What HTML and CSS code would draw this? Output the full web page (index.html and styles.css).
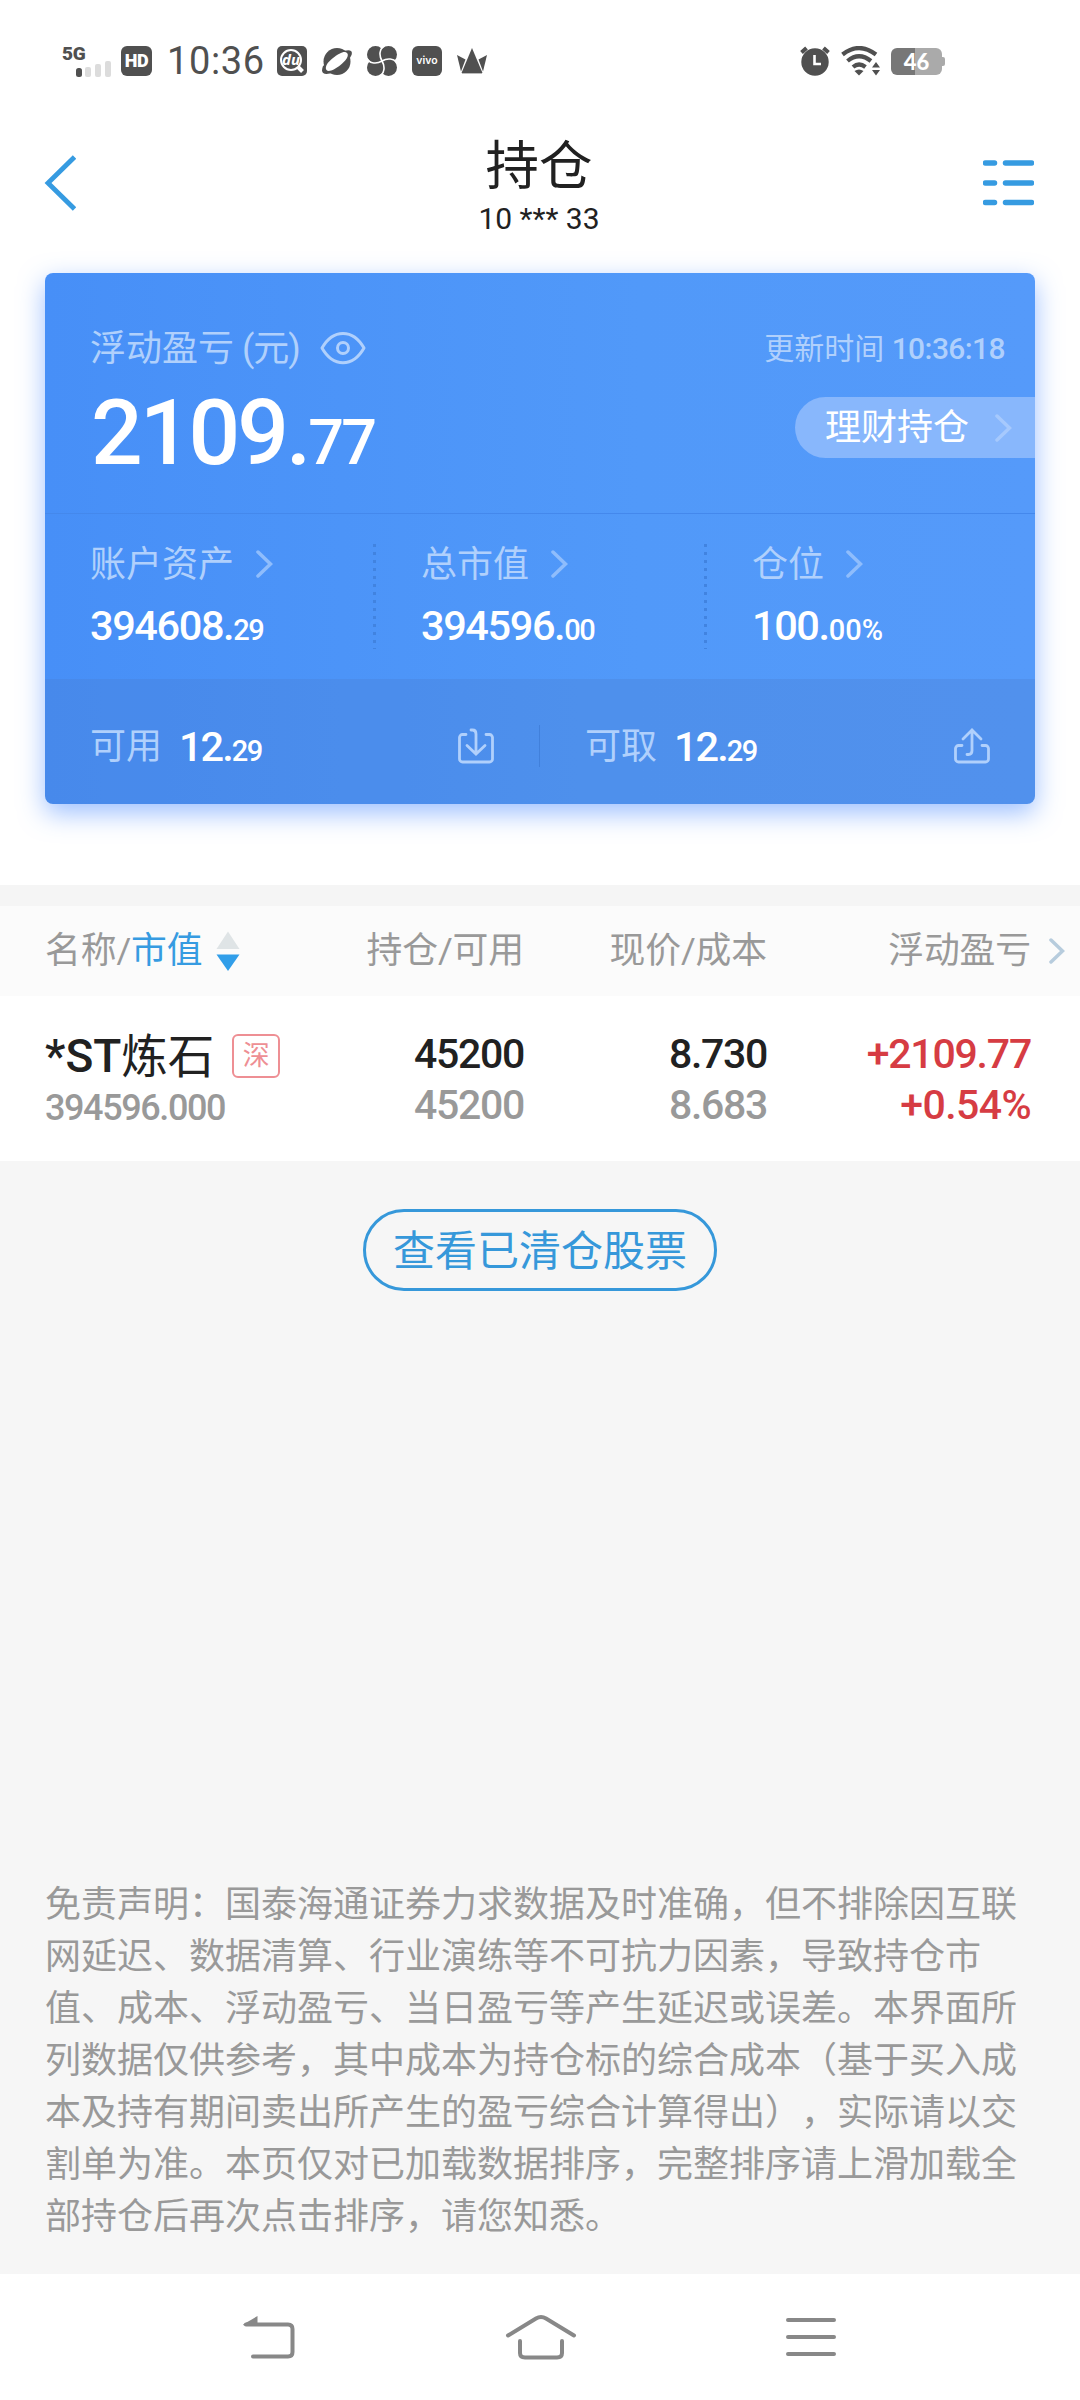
FILE: index.html
```html
<!DOCTYPE html>
<html lang="zh-CN">
<head>
<meta charset="utf-8">
<title>持仓</title>
<link rel="stylesheet" href="styles.css">
</head>
<body>
<div class="screen">
  <div class="status">
    <div class="status-left">
      <svg class="signal" width="50" height="40" viewBox="0 -2 50 40">
        <text x="1" y="17" class="g5">5G</text>
        <rect x="15" y="25" width="6" height="9" rx="2.500" fill="#505050"/>
        <rect x="24" y="24" width="6" height="10" rx="2" fill="#dcdcdc"/>
        <rect x="34" y="21" width="6" height="13" rx="2" fill="#dcdcdc"/>
        <rect x="44" y="18" width="6" height="16" rx="2" fill="#dcdcdc"/>
      </svg>
      <span class="chip hd">HD</span>
      <span class="clock">10:36</span>
      <svg class="app" width="30" height="30" viewBox="0 0 30 30">
        <rect width="30" height="30" rx="5" fill="#505050"/>
        <circle cx="14" cy="14" r="10" fill="none" stroke="#fff" stroke-width="2"/>
        <path d="M21 21l4.500 4.500" stroke="#fff" stroke-width="4"/>
        <text x="14" y="18.500" class="du">du</text>
      </svg>
      <svg class="app" width="30" height="30" viewBox="0 0 30 30">
        <circle cx="15" cy="15.500" r="13.500" fill="#505050"/>
        <path d="M22 5C28 3.500 31 4.500 29.500 9 26 17 17 24.500 8 27.500 1 29-1.500 26.500 1 20Z" fill="#505050"/>
        <path d="M25 7c2.500 2.500-1 7.500-6.500 12S6.500 26.500 4.500 24 5 16.500 11 12 22.500 4.500 25 7Z" fill="#fff"/>
      </svg>
      <svg class="app" width="30" height="30" viewBox="0 0 30 30">
        <g fill="#505050"><circle cx="8.500" cy="8.500" r="8.500"/><circle cx="21.500" cy="8.500" r="8.500"/><circle cx="21.500" cy="21.500" r="8.500"/><circle cx="8.500" cy="21.500" r="8.500"/><rect x="8" y="8" width="14" height="14"/></g>
        <g fill="none" stroke="#fff" stroke-width="1.600"><path d="M17.500-.5C12 3 12 10 15 15"/><path d="M30.500 17.500C27 12 20 12 15 15"/><path d="M12.500 30.500C18 27 18 20 15 15"/><path d="M-.5 12.500C3 18 10 18 15 15"/></g>
      </svg>
      <span class="chip vivo">vivo</span>
      <svg class="app" width="30" height="30" viewBox="0 0 30 30">
        <g fill="#505050"><path d="M15 2L25.500 27H4.500Z"/><path d="M0 9L8.500 13.500 4 25.500Z"/><path d="M30 9L21.500 13.500 26 25.500Z"/></g>
        <path d="M5 27.500H25" stroke="#bbb" stroke-width="1"/>
      </svg>
    </div>
    <div class="status-right">
      <svg width="30" height="30" viewBox="0 0 30 30">
        <circle cx="15" cy="16" r="13.700" fill="#505050"/>
        <path d="M1.500 6.500L6.500 2M28.500 6.500L23.500 2" stroke="#505050" stroke-width="4"/>
        <path d="M14.500 9v9h6.500" fill="none" stroke="#fff" stroke-width="2.600"/>
      </svg>
      <svg class="wifi" width="39" height="30" viewBox="0 0 39 30">
        <g fill="none" stroke="#505050" stroke-width="4.200"><path d="M1.500 8.500Q18-4.500 35 8.500"/><path d="M6.500 15Q18 5.500 30 15"/><path d="M12 21Q18 16 24.500 21"/></g>
        <path d="M13.500 25Q18 22 22.500 25L18 29.500Z" fill="#505050"/>
        <path d="M26 31V20L34 11h7v20Z" fill="#fff"/>
        <path d="M31 21.500h8L35 16ZM31 24h8L35 29.500Z" fill="#505050"/>
      </svg>
      <span class="battery">46</span>
    </div>
  </div>

  <header class="header">
    <svg width="32" height="56" viewBox="0 0 32 56"><path d="M30.500 2L4 28 30.500 54" fill="none" stroke="#369be1" stroke-width="4.800"/></svg>
    <div class="titles">
      <h1 class="title">持仓</h1>
      <div class="account">10 *** 33</div>
    </div>
    <svg width="51" height="48" viewBox="0 0 51 48"><path d="M2.500 4h9M22.500 4h26M2.500 24h9M22.500 24h26M2.500 43.500h9M22.500 43.500h26" stroke="#369be1" stroke-width="5.500" stroke-linecap="round"/></svg>
  </header>

  <section class="card">
    <div class="summary">
      <div>
        <div class="label summary-label">浮动盈亏<span class="unit">(元)</span>
          <svg width="46" height="34" viewBox="0 0 46 34"><path d="M2 17C13-2.500 33-2.500 44 17 33 36.500 13 36.500 2 17Z" fill="none" stroke="#b0d0fc" stroke-width="3" stroke-linejoin="round"/><circle cx="23" cy="17" r="5.500" fill="none" stroke="#b0d0fc" stroke-width="3"/></svg>
        </div>
        <div class="total">2109.<span class="total-dec">77</span></div>
      </div>
      <div class="summary-right">
        <div class="updated">更新时间 <span class="updated-time">10:36:18</span></div>
        <div class="wealth"><span class="wealth-text">理财持仓</span><svg width="17" height="28" viewBox="0 0 17 28"><path d="M2 2L14.500 14 2 26" class="chev"/></svg></div>
      </div>
    </div>
    <div class="stats">
      <div class="stat">
        <div class="label">账户资产<svg width="17" height="28" viewBox="0 0 17 28"><path d="M2 2L14.500 14 2 26" class="chev"/></svg></div>
        <div class="num">394608.<span class="dec">29</span></div>
      </div>
      <div class="stat">
        <div class="label">总市值<svg width="17" height="28" viewBox="0 0 17 28"><path d="M2 2L14.500 14 2 26" class="chev"/></svg></div>
        <div class="num">394596.<span class="dec">00</span></div>
      </div>
      <div class="stat">
        <div class="label">仓位<svg width="17" height="28" viewBox="0 0 17 28"><path d="M2 2L14.500 14 2 26" class="chev"/></svg></div>
        <div class="num ratio">100.<span class="dec">00%</span></div>
      </div>
    </div>
    <div class="cash">
      <div class="cash-item">
        <span class="label">可用</span><span class="num">12.<span class="dec">29</span></span>
        <svg width="36" height="36" viewBox="0 0 36 36"><g class="line"><path d="M8 6.500H4.500a3 3 0 0 0-3 3V31a3 3 0 0 0 3 3H31.500a3 3 0 0 0 3-3V9.500a3 3 0 0 0-3-3H28"/><path d="M13 2h1.500Q18 2 18 6V25M9 17.500L18 26 27 17.500"/></g></svg>
      </div>
      <div class="cash-item">
        <span class="label">可取</span><span class="num">12.<span class="dec">29</span></span>
        <svg width="36" height="36" viewBox="0 0 36 36"><g class="line"><path d="M8 17.500H4.500a3 3 0 0 0-3 3V31a3 3 0 0 0 3 3H31.500a3 3 0 0 0 3-3V20.500a3 3 0 0 0-3-3H28"/><path d="M13 26.500h1.500Q18 26.500 18 22.500V2M9 11L18 2 27 11"/></g></svg>
      </div>
    </div>
  </section>

  <section class="table">
    <div class="thead">
      <div class="th-name">名称/<span class="active">市值</span>
        <svg width="24" height="40" viewBox="0 0 24 40"><path d="M12 .5L23.500 18H.5Z" fill="#dfe4e6"/><path d="M12 40L23.500 23.500H.5Z" fill="#319ee9"/></svg>
      </div>
      <div>持仓/可用</div>
      <div>现价/成本</div>
      <div>浮动盈亏</div>
      <svg class="more" width="16" height="26" viewBox="0 0 16 26"><path d="M2 2L13.500 13 2 24" fill="none" stroke="#b7ccdd" stroke-width="3.500" stroke-linecap="round"/></svg>
    </div>
    <div class="row">
      <div class="stock">
        <div class="name">*ST<span class="name-cn">炼石</span><span class="tag">深</span></div>
        <div class="value">394596.000</div>
      </div>
      <div class="cell"><div>45200</div><div class="sub">45200</div></div>
      <div class="cell"><div>8.730</div><div class="sub">8.683</div></div>
      <div class="cell gain"><div>+2109.77</div><div class="rate">+0.54%</div></div>
    </div>
  </section>

  <main class="rest">
    <a class="cleared">查看已清仓股票</a>
    <p class="disclaimer">免责声明：国泰海通证券力求数据及时准确，但不排除因互联网延迟、数据清算、行业演练等不可抗力因素，导致持仓市值、成本、浮动盈亏、当日盈亏等产生延迟或误差。本界面所列数据仅供参考，其中成本为持仓标的综合成本（基于买入成本及持有期间卖出所产生的盈亏综合计算得出），实际请以交割单为准。本页仅对已加载数据排序，完整排序请上滑加载全部持仓后再次点击排序，请您知悉。</p>
  </main>

  <nav class="nav">
    <svg width="52" height="44" viewBox="0 0 52 44"><path d="M0 9.500L14.500 1V10.500H1Z" fill="#888"/><path d="M3 9.500H45Q49.500 9.500 49.500 14V37Q49.500 41.500 45 41.500H10" fill="none" stroke="#888" stroke-width="4" stroke-linecap="round"/></svg>
    <svg width="72" height="46" viewBox="0 0 72 46"><g fill="none" stroke="#888" stroke-width="4" stroke-linecap="round"><path d="M3 21.500L31 4.500Q36 1.500 41 4.500L69 21.500"/><path d="M15 27V39Q15 43.500 20 43.500H52Q57 43.500 57 39V27"/></g></svg>
    <svg width="50" height="40" viewBox="0 0 50 40"><path d="M2 3H48M2 20H48M2 37H48" stroke="#888" stroke-width="4" stroke-linecap="round"/></svg>
  </nav>
</div>
</body>
</html>
```

FILE: styles.css
```css
* { box-sizing: border-box; }
body {
  margin: 0;
  background: #f5f5f5;
  font-family: Roboto, "Noto Sans CJK SC", sans-serif;
  color: #212121;
  text-spacing-trim: space-all;
}
svg { display: block; flex: none; }
.screen { width: 1080px; height: 2400px; display: flex; flex-direction: column; background: #fff; }

/* system status bar */
.status { flex: none; height: 110px; display: flex; align-items: center; justify-content: space-between; padding: 12px 135px 0 61px; color: #505050; }
.status-left, .status-right { display: flex; align-items: center; }
.signal { margin-right: 10px; }
.g5 { font: 900 19px Roboto, sans-serif; fill: #505050; letter-spacing: -.2px; }
.chip { width: 31px; height: 30px; border-radius: 6px; background: #505050; color: #fff; text-align: center; line-height: 30px; }
.hd { font-size: 18px; font-weight: 900; margin-right: 15px; letter-spacing: -.5px; }
.clock { font-size: 38px; line-height: 40px; width: 110px; letter-spacing: .6px; }
.app { margin-right: 15px; }
.du { font: italic 700 15px "Open Sans", sans-serif; fill: #fff; text-anchor: middle; }
.vivo { width: 30px; font: 600 10.500px/30px Inter, sans-serif; margin-right: 15px; }
.wifi { margin: 0 11px; }
.battery {
  width: 51px; height: 27px; border-radius: 6px; margin-right: 3px; position: relative;
  background: linear-gradient(90deg, #777 24px, #aaa 24px);
  color: #fff; text-align: center; font: 900 22px/28px Lato, sans-serif;
}
.battery::after { content: ""; position: absolute; right: -3px; top: 9px; width: 3px; height: 9px; background: #aaa; border-radius: 0 2px 2px 0; }

/* page header */
.header { flex: none; height: 163px; display: flex; align-items: center; justify-content: space-between; padding: 0 46px 18px 44px; }
.titles { text-align: center; padding-left: 19px; }
.title { margin: 0; font-size: 53.500px; line-height: 73px; font-weight: 400; }
.account { font-size: 30px; line-height: 32px; }

/* asset card */
.card {
  margin: 0 45px; height: 531px; flex: none; border-radius: 8px; overflow: hidden;
  background: linear-gradient(90deg, #478ff7, #5199f9 60%, #559afa);
  box-shadow: 0 9px 26px rgba(60, 130, 255, .5);
  color: #fff;
}
.label { display: flex; align-items: center; font-size: 36px; line-height: 40px; padding-top: 2px; height: 40px; color: #b0d0fc; }
.label svg { margin: -2px 0 0 22px; }
.chev { fill: none; stroke: #8fbdfc; stroke-width: 3.5; stroke-linecap: round; }
.summary { height: 241px; border-bottom: 1px solid #4488ec; padding: 50px 0 0 46px; display: flex; justify-content: space-between; }
.summary-label { height: 50px; margin-left: -1px; }
.summary-label svg { margin-left: 0; }
.unit { margin: 0 20px 0 8px; letter-spacing: -1px; }
.total { font-size: 91px; font-weight: 500; line-height: 100px; margin-top: 10px; letter-spacing: -3px; }
.total-dec { font-size: 63px; letter-spacing: -2.800px; }
.summary-right { display: flex; flex-direction: column; align-items: flex-end; }
.updated { font-size: 30px; line-height: 50px; padding: 1px 30px 0 0; color: #b0d0fc; }
.updated-time { font-weight: 500; letter-spacing: -.6px; }
.wealth { margin-top: 23px; width: 240px; height: 61px; border-radius: 31px 0 0 31px; background: #88b7fc; padding: 0 23px 0 30px; display: flex; align-items: center; justify-content: space-between; font-size: 36px; }
.wealth .chev { stroke: #a6c9fd; }
.wealth-text { line-height: 40px; }

.stats { height: 165px; padding: 30px 0 31px 45px; display: grid; grid-template-columns: repeat(3, 331px); }
.stat { position: relative; }
.stat + .stat::before {
  content: ""; position: absolute; left: -48px; top: 0; width: 3px; height: 105px;
  background: repeating-linear-gradient(#4183e0 0 3px, transparent 3px 8px);
}
.num { font-size: 41.500px; font-weight: 500; line-height: 44px; letter-spacing: -1.400px; }
.dec { font-size: 29px; letter-spacing: -1.500px; }
.ratio .dec { letter-spacing: 0; }
.stat .num { margin-top: 20px; }

.cash { height: 125px; background: rgba(70, 120, 200, .25); display: grid; grid-template-columns: 494px 496px; }
.cash-item { display: flex; align-items: center; padding: 9px 45px 0; position: relative; }
.cash-item + .cash-item { padding-left: 46px; }
.cash-item .num { margin-left: 17px; padding-top: 5px; letter-spacing: -2px; }
.cash-item svg { margin-left: auto; }
.cash-item + .cash-item::before { content: ""; position: absolute; left: 0; top: 46px; width: 1px; height: 42px; background: #4180db; }
.line { fill: none; stroke: #b0d0fc; stroke-width: 2.800; stroke-linecap: round; }

/* holdings table */
.table { margin-top: 81px; border-top: 21px solid #f5f5f5; flex: none; }
.thead, .row { display: grid; grid-template-columns: 279px 200px 243px 264px 49px; padding-left: 45px; text-align: right; }
.thead { height: 90px; background: #fbfbfb; font-size: 35.800px; letter-spacing: -.1px; color: #999; align-items: center; line-height: 40px; }
.th-name { display: flex; align-items: center; }
.active { color: #369be1; }
.th-name svg { margin: -1px 0 0 14px; }
.more { justify-self: end; margin-right: 15px; }
.row { height: 165px; align-content: start; padding-top: 33px; }
.cell { font-size: 41px; font-weight: 500; line-height: 51px; letter-spacing: -1.300px; }
.sub { color: #999; }
.gain { color: #d63c43; letter-spacing: -1.200px; }
.rate { letter-spacing: -.600px; }
.stock { text-align: left; }
.name { display: flex; align-items: center; height: 54px; font-size: 46px; font-weight: 500; line-height: 54px; white-space: nowrap; }
.name-cn { font-weight: 400; font-size: 46.500px; padding-top: 1px; }
.tag { margin-left: 18px; width: 48px; height: 44px; border: 2px solid #ee8f94; border-radius: 6px; color: #ee8f94; font-size: 27px; font-weight: 400; line-height: 41px; text-align: center; }
.value { font-size: 36px; font-weight: 500; line-height: 51px; color: #999; letter-spacing: -1.400px; }

/* remaining page area */
.rest { flex: 1; background: #f6f6f6; display: flex; flex-direction: column; align-items: center; justify-content: space-between; padding: 48px 63px 31px 45px; }
.cleared { width: 354px; height: 82px; margin-left: 18px; border: 3px solid #3698da; border-radius: 41px; color: #3698da; font-size: 42px; line-height: 79px; text-align: center; }
.disclaimer { margin: 0; font-size: 36px; line-height: 52px; color: #999; width: 972px; }

/* system navigation bar */
.nav { height: 126px; flex: none; display: flex; align-items: center; justify-content: space-between; padding: 0 244px 1px 243px; }
```
